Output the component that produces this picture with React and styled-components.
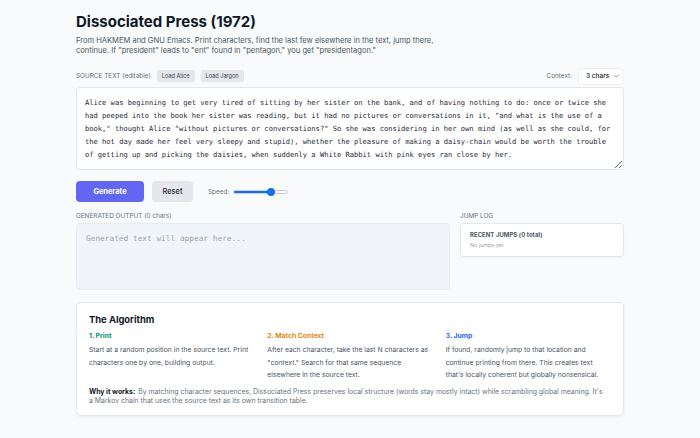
import React, { useState } from "react";
import styled, { createGlobalStyle } from "styled-components";

const ALICE =
  'Alice was beginning to get very tired of sitting by her sister on the bank, and of having nothing to do: once or twice she had peeped into the book her sister was reading, but it had no pictures or conversations in it, "and what is the use of a book," thought Alice "without pictures or conversations?" So she was considering in her own mind (as well as she could, for the hot day made her feel very sleepy and stupid), whether the pleasure of making a daisy-chain would be worth the trouble of getting up and picking the daisies, when suddenly a White Rabbit with pink eyes ran close by her.';

const GlobalStyle = createGlobalStyle`
  * { box-sizing: border-box; }
  body {
    margin: 0;
    background: #f8fafc;
    font-family: Inter, "Noto Sans", sans-serif;
    color: #111827;
  }
`;

const Page = styled.div`
  width: 548px;
  margin: 0 auto;
  padding: 12px 0 20px;
`;

const Title = styled.h1`
  margin: 0;
  font-size: 15px;
  font-weight: 700;
  color: #111827;
  line-height: 20px;
`;

const Subtitle = styled.p`
  margin: 4px 0 0;
  width: 370px;
  font-size: 7.55px;
  line-height: 9.5px;
  color: #4b5563;
`;

const SourceBar = styled.div`
  display: flex;
  align-items: center;
  justify-content: space-between;
  margin-top: 12px;
  height: 18px;
`;

const Group = styled.div`
  display: flex;
  align-items: center;
  gap: ${(p) => p.gap || 6}px;
`;

const Label = styled.span`
  font-size: 6.4px;
  color: #6b7280;
`;

const SmallButton = styled.button`
  font-family: inherit;
  font-size: 5.6px;
  color: #374151;
  background: #e5e7eb;
  border: 0;
  border-radius: 2px;
  padding: 3px 5px;
  line-height: 6px;
`;

const SelectButton = styled.button`
  display: flex;
  align-items: center;
  justify-content: space-between;
  width: 46px;
  height: 17px;
  padding: 0 4px 0 7px;
  font-family: inherit;
  font-size: 6.5px;
  font-weight: 500;
  color: #111827;
  background: #fff;
  border: 1px solid #eef0f3;
  border-radius: 3px;
`;

const SourceArea = styled.textarea`
  display: block;
  width: 100%;
  height: 83px;
  margin-top: 2px;
  padding: 8px 8px;
  font-family: "DejaVu Sans Mono", "Liberation Mono", monospace;
  font-size: 7.1px;
  line-height: 13px;
  color: #1f2937;
  background: #fff;
  border: 1px solid #e5e7eb;
  border-radius: 4px;
  resize: vertical;
  outline: none;
`;

const Controls = styled.div`
  display: flex;
  align-items: center;
  gap: 8px;
  margin-top: 11px;
`;

const ActionButton = styled.button`
  height: 21px;
  width: ${(p) => p.w}px;
  font-family: inherit;
  font-size: 7.4px;
  font-weight: ${(p) => (p.primary ? 700 : 500)};
  color: ${(p) => (p.primary ? "#fff" : "#1f2937")};
  background: ${(p) => (p.primary ? "#6366f1" : "#e5e7eb")};
  border: 0;
  border-radius: 4px;
`;

const SpeedGroup = styled.div`
  display: flex;
  align-items: center;
  gap: 4px;
  margin-left: 7px;
`;

const Range = styled.input`
  -webkit-appearance: none;
  appearance: none;
  width: 55px;
  height: 4px;
  margin: 0;
  border-radius: 3px;
  border: 0.5px solid #c7ccd4;
  background: linear-gradient(
    to right,
    #1a6fe6 0%,
    #1a6fe6 ${(p) => p.pct}%,
    #fff ${(p) => p.pct}%,
    #fff 100%
  );
  &::-webkit-slider-thumb {
    -webkit-appearance: none;
    width: 8px;
    height: 8px;
    border-radius: 50%;
    background: #1a6fe6;
    border: 0;
  }
`;

const OutputGrid = styled.div`
  display: grid;
  grid-template-columns: 1fr 164px;
  gap: 10px;
  margin-top: 10px;
`;

const Column = styled.div`
  display: flex;
  flex-direction: column;
  gap: 3px;
`;

const OutputBox = styled.div`
  height: 67px;
  padding: 9px 9px;
  background: #f1f5f9;
  border: 1px solid #e9edf2;
  border-radius: 4px;
  font-family: "DejaVu Sans Mono", "Liberation Mono", monospace;
  font-size: 7.8px;
  line-height: 11px;
  color: #9ca3af;
`;

const LogBox = styled.div`
  height: 34px;
  padding: 7px 9px;
  background: #fff;
  border: 1px solid #e5e7eb;
  border-radius: 4px;
  box-shadow: 0 1px 2px rgba(15, 23, 42, 0.04);
`;

const LogTitle = styled.div`
  font-size: 5.9px;
  font-weight: 700;
  color: #4b5563;
  letter-spacing: 0.1px;
`;

const LogEmpty = styled.div`
  margin-top: 4px;
  font-size: 5.4px;
  color: #9ca3af;
`;

const Card = styled.section`
  margin-top: 12px;
  padding: 10px 12px 9px;
  background: #fff;
  border: 1px solid #e5e7eb;
  border-radius: 5px;
  box-shadow: 0 1px 3px rgba(15, 23, 42, 0.05);
`;

const CardTitle = styled.h2`
  margin: 0;
  font-size: 9.4px;
  font-weight: 700;
  color: #111827;
  line-height: 14px;
`;

const Steps = styled.div`
  display: grid;
  grid-template-columns: repeat(3, 1fr);
  gap: 13px;
  margin-top: 3px;
`;

const StepTitle = styled.div`
  font-size: 6.8px;
  font-weight: 700;
  color: ${(p) => p.color};
  line-height: 12px;
`;

const StepText = styled.p`
  margin: 2px 0 0;
  font-size: 6.8px;
  line-height: 12.5px;
  color: #4b5563;
`;

const Why = styled.p`
  margin: 5px 0 0;
  padding-right: 6px;
  font-size: 6.9px;
  line-height: 9.5px;
  color: #6b7280;
  b {
    color: #111827;
    font-weight: 700;
    margin-right: 1px;
  }
`;

const steps = [
  {
    title: "1. Print",
    color: "#059669",
    text: "Start at a random position in the source text. Print characters one by one, building output.",
  },
  {
    title: "2. Match Context",
    color: "#e08a0b",
    text: 'After each character, take the last N characters as "context." Search for that same sequence elsewhere in the source text.',
  },
  {
    title: "3. Jump",
    color: "#2563eb",
    text: "If found, randomly jump to that location and continue printing from there. This creates text that's locally coherent but globally nonsensical.",
  },
];

export default function App() {
  const [source, setSource] = useState(ALICE);
  const [speed, setSpeed] = useState(72);

  return (
    <Page>
      <GlobalStyle />
      <Title>Dissociated Press (1972)</Title>
      <Subtitle>
        From HAKMEM and GNU Emacs. Print characters, find the last few elsewhere in the text, jump
        there, continue. If "president" leads to "ent" found in "pentagon," you get
        "presidentagon."
      </Subtitle>

      <SourceBar>
        <Group gap={6}>
          <Label>SOURCE TEXT (editable)</Label>
          <SmallButton onClick={() => setSource(ALICE)}>Load Alice</SmallButton>
          <SmallButton>Load Jargon</SmallButton>
        </Group>
        <Group gap={6}>
          <Label>Context:</Label>
          <SelectButton>
            <span>3 chars</span>
            <svg width="5" height="4" viewBox="0 0 10 6" fill="none">
              <path d="M1 1l4 4 4-4" stroke="#6b7280" strokeWidth="1.4" strokeLinecap="round" strokeLinejoin="round" />
            </svg>
          </SelectButton>
        </Group>
      </SourceBar>

      <SourceArea value={source} onChange={(e) => setSource(e.target.value)} spellCheck={false} />

      <Controls>
        <ActionButton primary w={68}>Generate</ActionButton>
        <ActionButton w={41}>Reset</ActionButton>
        <SpeedGroup>
          <Label>Speed:</Label>
          <Range
            type="range"
            min="0"
            max="100"
            value={speed}
            pct={speed}
            onChange={(e) => setSpeed(Number(e.target.value))}
          />
        </SpeedGroup>
      </Controls>

      <OutputGrid>
        <Column>
          <Label>GENERATED OUTPUT (0 chars)</Label>
          <OutputBox>Generated text will appear here...</OutputBox>
        </Column>
        <Column>
          <Label>JUMP LOG</Label>
          <LogBox>
            <LogTitle>RECENT JUMPS (0 total)</LogTitle>
            <LogEmpty>No jumps yet</LogEmpty>
          </LogBox>
        </Column>
      </OutputGrid>

      <Card>
        <CardTitle>The Algorithm</CardTitle>
        <Steps>
          {steps.map((s) => (
            <div key={s.title}>
              <StepTitle color={s.color}>{s.title}</StepTitle>
              <StepText>{s.text}</StepText>
            </div>
          ))}
        </Steps>
        <Why>
          <b>Why it works:</b> By matching character sequences, Dissociated Press preserves local
          structure (words stay mostly intact) while scrambling global meaning. It's a Markov chain
          that uses the source text as its own transition table.
        </Why>
      </Card>
    </Page>
  );
}
